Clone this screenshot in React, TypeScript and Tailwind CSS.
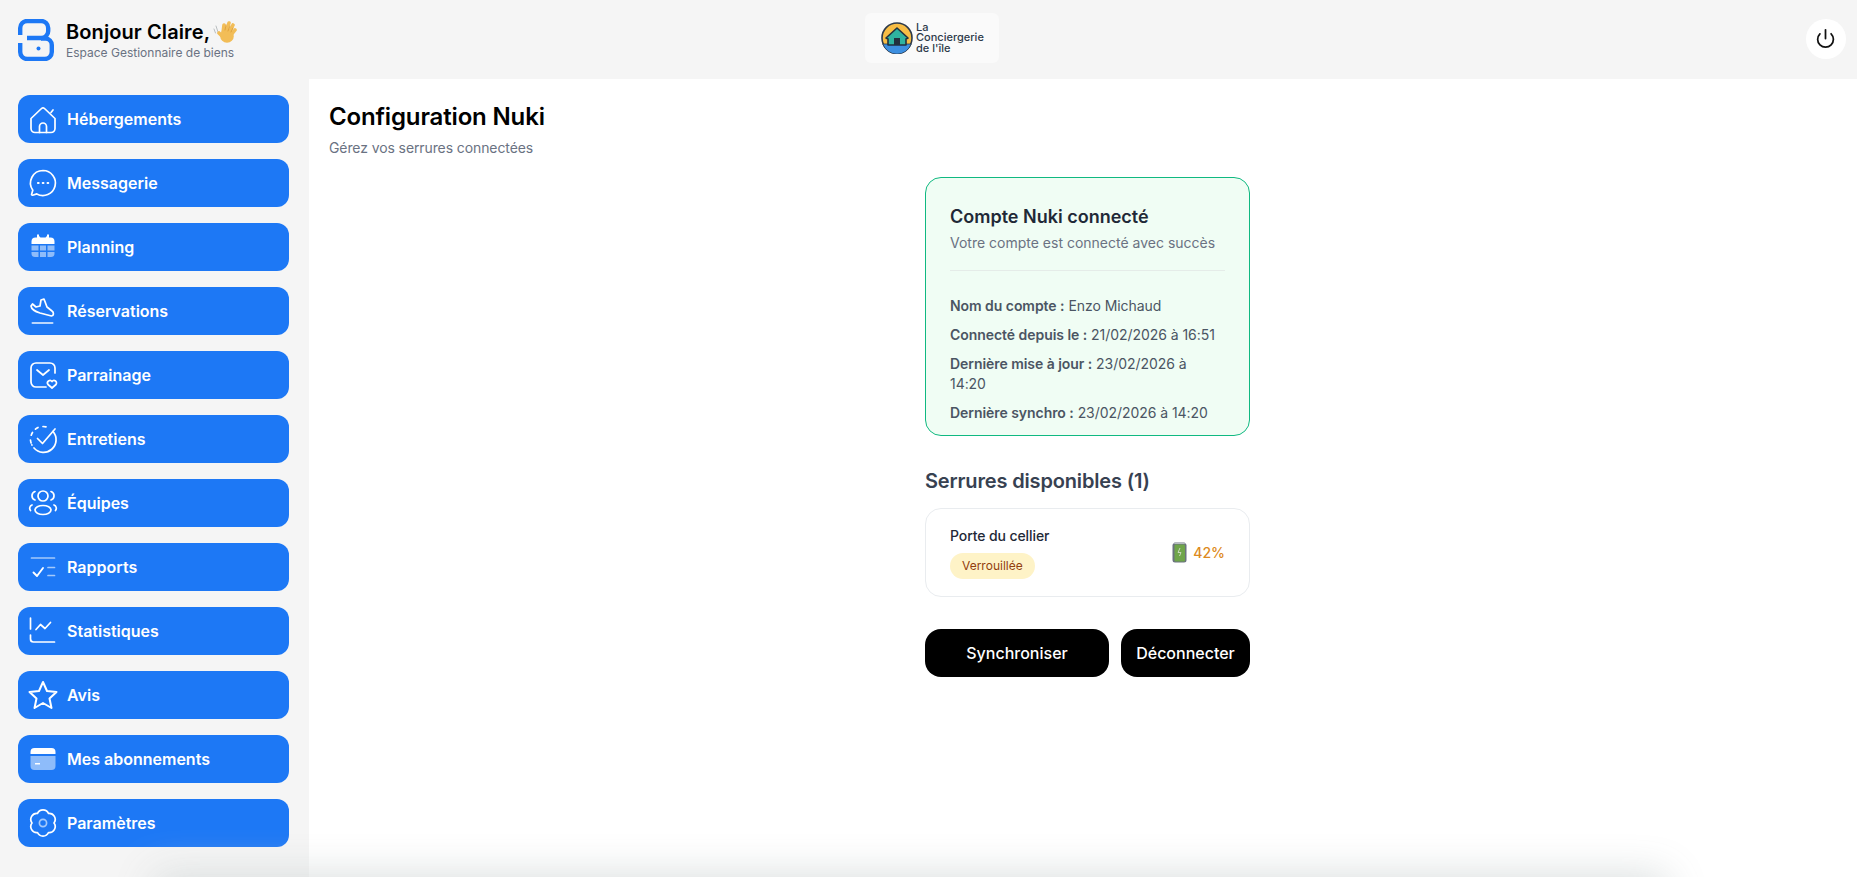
import { Power } from "lucide-react";
import type { ReactNode } from "react";

function Ico({ children }: { children: ReactNode }) {
  return (
    <svg width="32" height="32" viewBox="0 0 32 32" fill="none" stroke="white" strokeWidth="1.7" strokeLinecap="round" strokeLinejoin="round">
      {children}
    </svg>
  );
}

const navItems: { label: string; icon: ReactNode }[] = [
  {
    label: "Hébergements",
    icon: (
      <Ico>
        <path d="M4 15.500 14.500 5.500a2.200 2.200 0 0 1 3 0L28 15.500v10a4 4 0 0 1-4 4H8a4 4 0 0 1-4-4z" />
        <path d="M12.500 29.500v-6a3.500 3.500 0 0 1 7 0v6M24 9.500l2-2.500" />
      </Ico>
    ),
  },
  {
    label: "Messagerie",
    icon: (
      <Ico>
        <path d="M16 3.500a12.500 12.500 0 1 1-6.200 23.400l-4.200 1.300a.8.8 0 0 1-1-1l1.200-4A12.500 12.500 0 0 1 16 3.500z" />
        <path d="M11 16h.6M15.800 16h.6M20.600 16h.6" strokeWidth="2.200" />
      </Ico>
    ),
  },
  {
    label: "Planning",
    icon: (
      <svg width="32" height="32" viewBox="0 0 32 32" fill="white">
        <path d="M4.500 10.500a4 4 0 0 1 4-4h1.500V3.500h2v1.500l1.500 1.500h5L20 5V3.500h2v3h1.500a4 4 0 0 1 4 4v2.500h-23z" />
        <path opacity=".5" d="M4.500 14.500h7v5h-7zM13 14.500h6v5h-6zM20.500 14.500h7v5h-7zM4.500 21h7v5H8a3.500 3.500 0 0 1-3.500-3.500zM13 21h6v5h-6zM20.500 21h7v1.500A3.500 3.500 0 0 1 24 26h-3.500z" />
      </svg>
    ),
  },
  {
    label: "Réservations",
    icon: (
      <Ico>
        <path d="M13 11 14 5l3-1 3 8 5 4c2 1.500 2 4.500-.5 5L13 18C8 16.500 4.500 14 4 11l1.500-2L9 12z" />
        <path d="M5.500 28h20" strokeWidth="2" opacity=".7" />
      </Ico>
    ),
  },
  {
    label: "Parrainage",
    icon: (
      <Ico>
        <path d="M28 14V9a5 5 0 0 0-5-5H9a5 5 0 0 0-5 5v14a5 5 0 0 0 5 5h10" />
        <path d="m10 11 6 5 6-5" />
        <path d="M25 29l-4-3.500a2.500 2.500 0 0 1 4-3 2.500 2.500 0 0 1 4 3z" />
      </Ico>
    ),
  },
  {
    label: "Entretiens",
    icon: (
      <Ico>
        <path d="M16 3.500a12.500 12.500 0 0 1 3 .4M11 4.500a12.500 12.500 0 0 0-3 2M5.500 9.500a12.500 12.500 0 0 0-1.500 3.500M3.500 17a12.500 12.500 0 0 0 1.500 5" strokeDasharray="3 2" />
        <path d="M26 8.500A12.500 12.500 0 1 1 7 25" />
        <path d="m10.500 15.500 5 5L28 6" />
      </Ico>
    ),
  },
  {
    label: "Équipes",
    icon: (
      <svg width="32" height="32" viewBox="0 0 32 32" fill="none" stroke="white" strokeWidth="1.700" strokeLinecap="round">
        <circle cx="16" cy="9" r="5" />
        <ellipse cx="16" cy="23" rx="8" ry="4.500" />
        <path d="M8 4.500a4.500 4.500 0 0 0 0 8.500M24 4.500a4.500 4.500 0 0 1 0 8.500M5 18a3.500 3.500 0 0 0-1.500 5.500M27 18a3.500 3.500 0 0 1 1.500 5.500" />
      </svg>
    ),
  },
  {
    label: "Rapports",
    icon: (
      <Ico>
        <path d="M4.500 7h23" opacity=".6" />
        <path d="m6.500 21.500 3.500 3.500 6-8" strokeWidth="1.900" />
        <path d="M21 16.500h6.500M21 24.500h6.500" opacity=".6" />
      </Ico>
    ),
  },
  {
    label: "Statistiques",
    icon: (
      <Ico>
        <path d="M3.500 3v11" />
        <path d="M3.500 20v4a3 3 0 0 0 3 3h21" />
        <path d="m9 14.500 4.500-5 4.500 4 5.500-6" />
      </Ico>
    ),
  },
  {
    label: "Avis",
    icon: (
      <svg width="32" height="32" viewBox="0 0 32 32" fill="none" stroke="white" strokeWidth="2" strokeLinejoin="round">
        <path d="m16 3 4 9 9.500 1-7 6.500 2 9.500-8.500-5-8.500 5 2-9.500-7-6.500L12 12z" />
      </svg>
    ),
  },
  {
    label: "Mes abonnements",
    icon: (
      <svg width="32" height="32" viewBox="0 0 32 32" fill="white">
        <path d="M3.500 9a4 4 0 0 1 4-4h17a4 4 0 0 1 4 4v2h-25z" />
        <path opacity=".5" d="M3.500 13h25v10a4 4 0 0 1-4 4h-17a4 4 0 0 1-4-4z" />
        <path d="M8 20h5v1.500H8z" />
      </svg>
    ),
  },
  {
    label: "Paramètres",
    icon: (
      <svg width="32" height="32" viewBox="0 0 32 32" fill="none" stroke="white" strokeWidth="1.700" strokeLinejoin="round">
        <path d="M10.500 6.470A6 6 0 0 1 21.500 6.470 6 6 0 0 1 27 16 6 6 0 0 1 21.500 25.530 6 6 0 0 1 10.500 25.530 6 6 0 0 1 5 16 6 6 0 0 1 10.500 6.470z" />
        <circle cx="16" cy="16" r="3.600" opacity=".6" />
      </svg>
    ),
  },
];

const accountRows = [
  ["Nom du compte :", "Enzo Michaud"],
  ["Connecté depuis le :", "21/02/2026 à 16:51"],
  ["Dernière mise à jour :", "23/02/2026 à 14:20"],
  ["Dernière synchro :", "23/02/2026 à 14:20"],
];

function BrandLogo() {
  return (
    <svg width="36" height="42" viewBox="0 0 36 42" fill="none" stroke="#1d78f5" strokeWidth="4.400">
      <path d="M2.200 16V9a7 7 0 0 1 7-7h14a7 7 0 0 1 7 7v2.500a7 7 0 0 1-7 7.500H9" />
      <path d="M23 19.500h4.500a6.500 6.500 0 0 1 6.300 6.500v7a7 7 0 0 1-7 7H9.200a7 7 0 0 1-7-7v-9" />
      <circle cx="20.500" cy="29.500" r="2" fill="#1d78f5" stroke="none" />
    </svg>
  );
}

function WaveEmoji() {
  return (
    <svg width="24" height="25" viewBox="0 0 24 25" fill="none" strokeLinecap="round">
      <path d="M3 7l2 6M1 10l1.500 4" stroke="#b9bec0" strokeWidth="1" />
      <g stroke="#f2bd57" strokeWidth="3.600">
        <path d="M10 14 11 6M13 13l3-9M16 14l4-8M18 16l4-5M9 17l-3-3" />
      </g>
      <circle cx="14" cy="17" r="6.800" fill="#f2bd57" />
      <path d="M12 11 13 6M15 12l2-5M18 13l2-4" stroke="#d99a35" strokeWidth=".8" />
    </svg>
  );
}

function ConciergerieLogo() {
  return (
    <svg width="32" height="32" viewBox="0 0 32 32">
      <circle cx="16" cy="16" r="15" fill="#f7bd45" stroke="#2e3a4a" strokeWidth="1.600" />
      <path d="M1.800 22h28.400a15 15 0 0 1-28.400 0z" fill="#3d8fe0" stroke="#2e3a4a" strokeWidth=".8" />
      <path d="M16 6 5 16l2 1v6h18v-6l2-1z" fill="#2fb3a0" stroke="#22303f" strokeWidth="1.600" strokeLinejoin="round" />
      <rect x="13" y="16" width="6" height="7" fill="#22303f" />
    </svg>
  );
}

function BatteryEmoji() {
  return (
    <svg width="15" height="21" viewBox="0 0 15 21">
      <rect x=".5" y="1" width="14" height="19.500" rx="2.500" fill="#6b7280" />
      <rect x="2.500" y="2.500" width="10.500" height="17" rx="1" fill="#6fa54a" />
      <rect x="2" y="0" width="11" height="2" rx="1" fill="#b7bcc2" />
      <path d="M8 6 6 10.500h3L7.500 14" stroke="#c9d8bd" strokeWidth="1" fill="none" />
    </svg>
  );
}

export default function App() {
  return (
    <div className="relative h-screen overflow-hidden bg-[#f5f5f5] font-['Inter','Noto_Sans',sans-serif] flex flex-col">
      <header className="h-[79px] shrink-0 grid grid-cols-3 items-center pl-[18px] pr-[11px]">
        <div className="flex items-center gap-3">
          <BrandLogo />
          <div>
            <div className="flex items-center gap-[3px] text-xl leading-[26px] font-semibold text-black tracking-[0.1px]">
              Bonjour Claire,
              <WaveEmoji />
            </div>
            <p className="text-xs leading-4 text-gray-500">Espace Gestionnaire de biens</p>
          </div>
        </div>

        <div className="justify-self-center mb-1 w-[134px] h-[50px] bg-[#fafafa] rounded-md flex items-center pl-4 gap-[3px]">
          <ConciergerieLogo />
          <div className="text-[11px] leading-[10.500px] text-[#2e3a4a] font-medium">
            <div>La</div>
            <div>Conciergerie</div>
            <div>de l'île</div>
          </div>
        </div>

        <div className="justify-self-end mb-[2px] w-10 h-10 rounded-full bg-white flex items-center justify-center">
          <Power size={21} color="#111" strokeWidth={2} />
        </div>
      </header>

      <div className="flex flex-1 min-h-0">
        <aside className="w-[309px] shrink-0 pl-[18px] pr-5 pt-4 flex flex-col gap-4">
          {navItems.map((item) => (
            <div key={item.label} className="h-12 shrink-0 rounded-xl bg-[#1d78f5] flex items-center pl-[9px] gap-2 text-white text-base font-semibold">
              {item.icon}
              <span>{item.label}</span>
            </div>
          ))}
        </aside>

        <main className="flex-1 bg-white pl-5 pr-[11px] pt-[22px]">
          <h1 className="text-2xl leading-8 font-semibold text-black tracking-[-0.15px]">Configuration Nuki</h1>
          <p className="text-sm leading-5 text-gray-500 mt-[5px] tracking-[-0.1px]">Gérez vos serrures connectées</p>

          <div className="w-[325px] mx-auto mt-[19px]">
            <section className="h-[259px] rounded-2xl border border-[#10b981] bg-[#f0fdf4] px-6 pt-[25px]">
              <h2 className="text-lg leading-[27px] font-semibold text-[#1f2937]">Compte Nuki connecté</h2>
              <p className="text-sm leading-5 text-gray-500 mt-[3px]">Votre compte est connecté avec succès</p>
              <div className="h-px bg-[#e5ece8] mt-[17px] mb-[25px]" />
              <div className="flex flex-col gap-[9px] text-sm leading-5 text-[#4b5563] tracking-[-0.05px]">
                {accountRows.map(([label, value]) => (
                  <p key={label}>
                    <span className="font-semibold">{label}</span> {value}
                  </p>
                ))}
              </div>
            </section>

            <h3 className="text-xl leading-7 font-semibold text-[#374151] mt-[31px] tracking-[-0.15px]">Serrures disponibles (1)</h3>

            <section className="h-[89px] mt-[13px] rounded-2xl border border-[#e9ecef] bg-white px-6 flex items-center justify-between">
              <div>
                <p className="text-sm leading-5 font-medium text-[#1f2937] tracking-[-0.1px]">Porte du cellier</p>
                <span className="mt-[7px] inline-flex items-center h-[26px] px-3 rounded-full bg-[#fef3c7] text-xs text-[#92400e]">Verrouillée</span>
              </div>
              <div className="flex items-center gap-[6px] text-sm font-medium text-[#dd8a20]">
                <BatteryEmoji />
                42%
              </div>
            </section>

            <div className="flex gap-3 mt-8">
              <button className="w-[184px] h-12 rounded-2xl bg-black text-white text-base font-medium">Synchroniser</button>
              <button className="flex-1 h-12 rounded-2xl bg-black text-white text-base font-medium">Déconnecter</button>
            </div>
          </div>
        </main>
      </div>

      {/* ombre en bas de page */}
      <div className="pointer-events-none absolute left-[175px] right-[210px] top-[895px] h-10 bg-[#d5dada] shadow-[0_0_40px_20px_rgba(213,218,218,0.9)]" />
    </div>
  );
}
